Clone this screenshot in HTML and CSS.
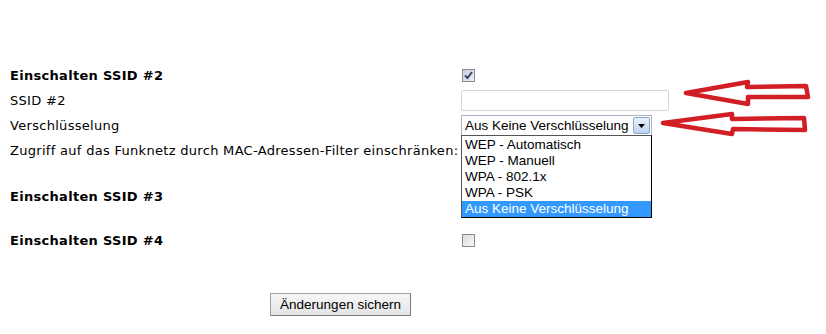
FILE: index.html
```html
<!DOCTYPE html>
<html>
<head>
<meta charset="utf-8">
<link rel="stylesheet" href="styles.css">
</head>
<body>
<div class="page">
  <div class="form">
    <div class="lbl bold">Einschalten SSID #2</div>
    <div class="ctl"><span class="cb checked"><svg width="9" height="9" viewBox="0 0 9 9"><path d="M1 4.5 L3.5 7 L8 1" fill="none" stroke="#3a4060" stroke-width="2"/></svg></span></div>

    <div class="lbl">SSID #2</div>
    <div class="ctl"><span class="txt"></span></div>

    <div class="lbl">Verschlüsselung</div>
    <div class="ctl">
      <div class="sel"><span class="sel-text">Aus Keine Verschlüsselung</span><span class="sel-btn"><svg width="7" height="4" viewBox="0 0 7 4"><path d="M0 0 H7 L3.5 4 Z" fill="#000"/></svg></span></div>
    </div>

    <div class="lbl">Zugriff auf das Funknetz durch MAC-Adressen-Filter einschränken:</div>
    <div class="ctl"></div>

    <div class="spacer"></div>

    <div class="lbl bold">Einschalten SSID #3</div>
    <div class="ctl"></div>

    <div class="spacer"></div>

    <div class="lbl bold">Einschalten SSID #4</div>
    <div class="ctl"><span class="cb"></span></div>
  </div>

  <div class="actions"><span class="btn">Änderungen sichern</span></div>

  <ul class="list">
    <li>WEP - Automatisch</li>
    <li>WEP - Manuell</li>
    <li>WPA - 802.1x</li>
    <li>WPA - PSK</li>
    <li class="hl">Aus Keine Verschlüsselung</li>
  </ul>

  <svg class="arrows" width="826" height="334" viewBox="0 0 826 334">
    <path d="M686 93 L748 82 L747 87 L806 86 L808 97 L748 97 L748 104 Z" fill="none" stroke="#d21f26" stroke-width="4.5" stroke-linejoin="round"/>
    <path d="M663 123 L732 114 L732 119 L804 118 L805 130 L733 129 L732 134 Z" fill="none" stroke="#d21f26" stroke-width="4.5" stroke-linejoin="round"/>
  </svg>
</div>
</body>
</html>
```

FILE: styles.css
```css
html, body {
  margin: 0;
  padding: 0;
  background: #fff;
}
.page {
  position: relative;
  width: 826px;
  height: 334px;
  overflow: hidden;
  font-family: "DejaVu Sans", Verdana, sans-serif;
  font-size: 13px;
  letter-spacing: 0.3px;
  color: #000;
}
.form {
  display: grid;
  grid-template-columns: 451px 1fr;
  grid-template-rows: 25px 25px 25px 25px 21px 25px 19px 25px;
  padding: 63px 0 0 10px;
}
.lbl {
  display: flex;
  align-items: center;
  white-space: nowrap;
}
.bold { font-weight: bold; }
.ctl {
  display: flex;
  align-items: center;
}
.spacer { grid-column: 1 / 3; }

.cb {
  width: 11px;
  height: 11px;
  border: 1px solid #8a8a8a;
  background: linear-gradient(135deg, #dcdcdc, #f8f8f8);
  display: inline-flex;
  align-items: center;
  justify-content: center;
  margin-left: 1px;
}
.cb.checked { background: linear-gradient(135deg, #c8cde0, #eef0f8); }
.txt {
  display: block;
  width: 206px;
  height: 19px;
  border: 1px solid #d4d4d4;
  border-radius: 2px;
  background: #fff;
}
.sel {
  display: flex;
  align-items: center;
  width: 189px;
  height: 19px;
  border: 1px solid #a9b4c4;
  background: #fff;
  font-family: "Liberation Sans", Arial, sans-serif;
  font-size: 13.5px;
  letter-spacing: 0;
  color: #000;
}
.sel-text {
  flex: 1;
  padding-left: 3px;
  white-space: nowrap;
}
.sel-btn {
  width: 15px;
  height: 15px;
  margin-right: 1px;
  border: 1px solid #8aa6c8;
  border-radius: 2px;
  background: linear-gradient(#eaf2fb, #bcd2ec);
  display: flex;
  align-items: center;
  justify-content: center;
}
.actions {
  padding: 40px 0 0 270px;
}
.btn {
  display: inline-block;
  width: 139px;
  height: 21px;
  line-height: 21px;
  text-align: center;
  border: 1px solid #a0a0a0;
  border-right-color: #7a7a7a;
  border-bottom-color: #7a7a7a;
  background: linear-gradient(#f7f7f7, #e4e4e4);
  font-family: "Liberation Sans", Arial, sans-serif;
  font-size: 13.5px;
  letter-spacing: 0;
  color: #000;
}
.list {
  position: absolute;
  left: 461px;
  top: 135px;
  width: 189px;
  margin: 0;
  padding: 1px 0 0;
  list-style: none;
  border: 1px solid #555;
  border-right-color: #000;
  border-bottom-color: #000;
  background: #fff;
  font-family: "Liberation Sans", Arial, sans-serif;
  font-size: 13.5px;
  letter-spacing: 0;
  color: #000;
}
.list li {
  height: 16px;
  line-height: 16px;
  padding-left: 3px;
  white-space: nowrap;
}
.list li.hl {
  background: #3399ff;
  color: #fff;
}
.arrows {
  position: absolute;
  left: 0;
  top: 0;
  pointer-events: none;
}
```
